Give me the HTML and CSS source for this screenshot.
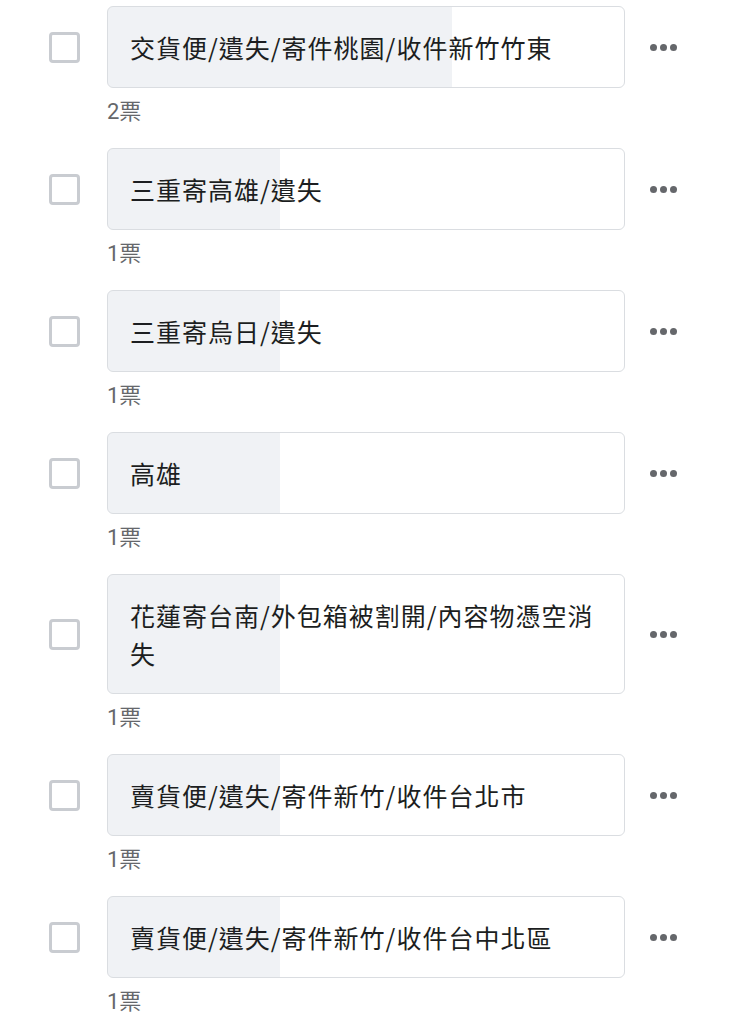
FILE: index.html
```html
<!DOCTYPE html>
<html lang="zh-Hant">
<head>
<meta charset="utf-8">
<link rel="stylesheet" href="styles.css">
</head>
<body>
<div class="poll">
  <div class="item">
    <div class="row">
      <span class="check"></span>
      <div class="option" style="--pct:66.7%">交貨便/遺失/寄件桃園/收件新竹竹東</div>
      <span class="more"><i></i><i></i><i></i></span>
    </div>
    <div class="votes">2票</div>
  </div>
  <div class="item">
    <div class="row">
      <span class="check"></span>
      <div class="option" style="--pct:33.4%">三重寄高雄/遺失</div>
      <span class="more"><i></i><i></i><i></i></span>
    </div>
    <div class="votes">1票</div>
  </div>
  <div class="item">
    <div class="row">
      <span class="check"></span>
      <div class="option" style="--pct:33.4%">三重寄烏日/遺失</div>
      <span class="more"><i></i><i></i><i></i></span>
    </div>
    <div class="votes">1票</div>
  </div>
  <div class="item">
    <div class="row">
      <span class="check"></span>
      <div class="option" style="--pct:33.4%">高雄</div>
      <span class="more"><i></i><i></i><i></i></span>
    </div>
    <div class="votes">1票</div>
  </div>
  <div class="item">
    <div class="row">
      <span class="check"></span>
      <div class="option" style="--pct:33.4%">花蓮寄台南/外包箱被割開/內容物憑空消失</div>
      <span class="more"><i></i><i></i><i></i></span>
    </div>
    <div class="votes">1票</div>
  </div>
  <div class="item">
    <div class="row">
      <span class="check"></span>
      <div class="option" style="--pct:33.4%">賣貨便/遺失/寄件新竹/收件台北市</div>
      <span class="more"><i></i><i></i><i></i></span>
    </div>
    <div class="votes">1票</div>
  </div>
  <div class="item">
    <div class="row">
      <span class="check"></span>
      <div class="option" style="--pct:33.4%">賣貨便/遺失/寄件新竹/收件台中北區</div>
      <span class="more"><i></i><i></i><i></i></span>
    </div>
    <div class="votes">1票</div>
  </div>
</div>
</body>
</html>
```
FILE: styles.css
```css
* { box-sizing: border-box; }
html, body { margin: 0; padding: 0; background: #ffffff; }
body {
  font-family: Roboto, "Noto Sans CJK TC", "Noto Sans", sans-serif;
  color: #1c1e21;
}
.poll {
  padding-top: 6px;
}
.item {
  margin-bottom: 21px;
}
.row {
  display: flex;
  align-items: center;
  padding-left: 49px;
}
.check {
  flex: 0 0 31px;
  width: 31px;
  height: 31px;
  border: 3px solid #c9ccd1;
  border-radius: 4px;
  margin-right: 27px;
}
.option {
  flex: 0 0 518px;
  width: 518px;
  border: 1px solid #dadde1;
  border-radius: 6px;
  padding: 21px 28px 21px 22px;
  font-family: "Noto Sans CJK TC", sans-serif;
  font-size: 25px;
  line-height: 38px;
  letter-spacing: 1px;
  color: #1c1e21;
  background: linear-gradient(to right, #f0f2f5 0, #f0f2f5 var(--pct), #ffffff var(--pct), #ffffff 100%);
}
.more {
  display: flex;
  gap: 3px;
  margin-left: 25px;
}
.more i {
  display: block;
  width: 7px;
  height: 7px;
  border-radius: 50%;
  background: #65676b;
}
.votes {
  margin-left: 107px;
  margin-top: 8px;
  font-size: 22px;
  line-height: 31px;
  color: #65676b;
}
```
